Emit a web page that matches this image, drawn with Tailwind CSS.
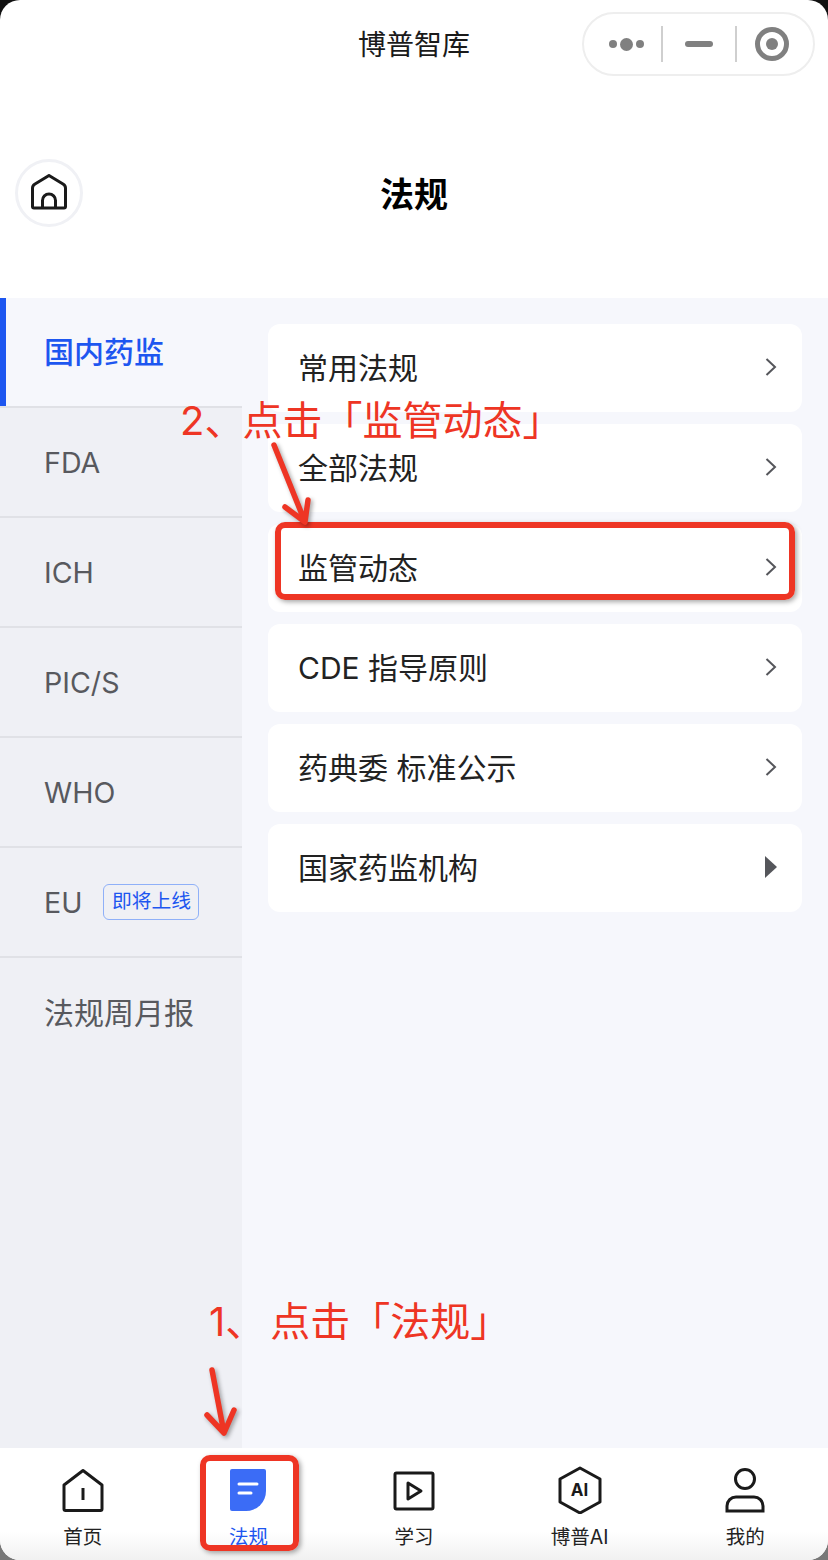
<!DOCTYPE html>
<html lang="en">
<head>
    <meta charset="UTF-8">
    <title>博普智库</title>
    <script src="https://cdn.jsdelivr.net/npm/@tailwindcss/browser@4"></script>
</head>
<body class="bg-gradient-to-b from-[#111111] from-50% to-[#777777] to-50% font-['Inter','Noto_Sans_CJK_SC',sans-serif]">
    <div class="relative w-[828px] h-[1560px] overflow-hidden bg-white rounded-[20px] flex flex-col">
        <!-- Mini program title bar -->
        <div class="relative h-[88px] shrink-0 flex items-center justify-center">
            <span class="text-[28px] text-[#1a1a1a] pt-[2px]">博普智库</span>
            <div class="absolute left-[582px] top-[12px] w-[233px] h-[64px] rounded-full border-2 border-[#eeeeee] flex items-center">
                <div class="w-[79px] h-[36px] pl-[8px] flex items-center justify-center gap-[3px] border-r-2 border-[#cfcfcf]">
                    <span class="w-[8px] h-[8px] rounded-full bg-[#808080]"></span>
                    <span class="w-[13px] h-[13px] rounded-full bg-[#808080]"></span>
                    <span class="w-[8px] h-[8px] rounded-full bg-[#808080]"></span>
                </div>
                <div class="w-[74px] h-[36px] flex items-center justify-center border-r-2 border-[#cfcfcf]">
                    <span class="w-[28px] h-[6px] rounded-full bg-[#808080]"></span>
                </div>
                <div class="flex-1 pr-[6px] flex items-center justify-center">
                    <span class="w-[34px] h-[34px] rounded-full border-[5px] border-[#808080] flex items-center justify-center">
                        <span class="w-[12px] h-[12px] rounded-full bg-[#808080]"></span>
                    </span>
                </div>
            </div>
        </div>

        <!-- Page header -->
        <div class="relative h-[210px] shrink-0 flex items-center justify-center">
            <div class="absolute left-[15px] top-[71px] w-[68px] h-[68px] rounded-full border-[3px] border-[#f0f1f5] flex items-center justify-center">
                <svg class="mb-[3px]" width="36" height="36" viewBox="0 0 36 36" fill="none" stroke="#1a1a1a" stroke-width="3" stroke-linejoin="round">
                    <path d="M18 1.5 L32 10 Q34.5 11.5 34.5 14 V32.5 a1.5 1.5 0 0 1 -1.5 1.5 H3 a1.5 1.5 0 0 1 -1.5 -1.5 V14 Q1.5 11.5 4 10 Z"/>
                    <path d="M11.5 34 V26.5 a6.5 6.5 0 0 1 13 0 V34"/>
                </svg>
            </div>
            <span class="text-[34px] font-bold text-black pt-[2px]">法规</span>
        </div>

        <!-- Body -->
        <div class="flex flex-1 min-h-0 bg-[#f6f7fc]">
            <div class="w-[242px] shrink-0 bg-[#eff0f5] text-[28.6px] text-[#58595e]">
                <div class="h-[110px] border-b-2 border-[#e0e1e6] bg-[#f6f7fc]">
                    <div class="h-full border-l-[6px] border-[#1d56f0] pl-[38px] flex items-center text-[30px] font-medium text-[#1d56f0]">国内药监</div>
                </div>
                <div class="h-[110px] border-b-2 border-[#e0e1e6] pl-[44px] pt-[2px] flex items-center">FDA</div>
                <div class="h-[110px] border-b-2 border-[#e0e1e6] pl-[44px] pt-[2px] flex items-center">ICH</div>
                <div class="h-[110px] border-b-2 border-[#e0e1e6] pl-[44px] pt-[2px] flex items-center">PIC/S</div>
                <div class="h-[110px] border-b-2 border-[#e0e1e6] pl-[44px] pt-[2px] flex items-center">WHO</div>
                <div class="h-[110px] border-b-2 border-[#e0e1e6] pl-[44px] flex items-center gap-[21px]">
                    <span class="pt-[2px]">EU</span>
                    <span class="w-[96px] h-[36px] rounded-[6px] border border-[#8fb0f8] text-[19.8px] text-[#1d56f0] flex items-center justify-center">即将上线</span>
                </div>
                <div class="h-[110px] pl-[44px] flex items-center text-[30px]">法规周月报</div>
            </div>
            <div class="flex-1 pl-[26px] pr-[26px] pt-[26px] flex flex-col gap-[12px] text-[30px] text-[#222222]">
                <div class="h-[88px] rounded-[12px] bg-white pl-[30px] pr-[25px] flex items-center justify-between">
                    <span>常用法规</span>
                    <svg class="mb-[2px]" width="12" height="18" viewBox="0 0 12 18" fill="none" stroke="#55565b" stroke-width="2"><path d="M1.5 1 L10 9 L1.5 17"/></svg>
                </div>
                <div class="h-[88px] rounded-[12px] bg-white pl-[30px] pr-[25px] flex items-center justify-between">
                    <span>全部法规</span>
                    <svg class="mb-[2px]" width="12" height="18" viewBox="0 0 12 18" fill="none" stroke="#55565b" stroke-width="2"><path d="M1.5 1 L10 9 L1.5 17"/></svg>
                </div>
                <div class="h-[88px] rounded-[12px] bg-white pl-[30px] pr-[25px] flex items-center justify-between">
                    <span>监管动态</span>
                    <svg class="mb-[2px]" width="12" height="18" viewBox="0 0 12 18" fill="none" stroke="#55565b" stroke-width="2"><path d="M1.5 1 L10 9 L1.5 17"/></svg>
                </div>
                <div class="h-[88px] rounded-[12px] bg-white pl-[30px] pr-[25px] flex items-center justify-between">
                    <span>CDE 指导原则</span>
                    <svg class="mb-[2px]" width="12" height="18" viewBox="0 0 12 18" fill="none" stroke="#55565b" stroke-width="2"><path d="M1.5 1 L10 9 L1.5 17"/></svg>
                </div>
                <div class="h-[88px] rounded-[12px] bg-white pl-[30px] pr-[25px] flex items-center justify-between">
                    <span>药典委 标准公示</span>
                    <svg class="mb-[2px]" width="12" height="18" viewBox="0 0 12 18" fill="none" stroke="#55565b" stroke-width="2"><path d="M1.5 1 L10 9 L1.5 17"/></svg>
                </div>
                <div class="h-[88px] rounded-[12px] bg-white pl-[30px] pr-[25px] flex items-center justify-between">
                    <span>国家药监机构</span>
                    <svg class="mb-[2px]" width="12" height="22" viewBox="0 0 12 22" fill="#55565b"><path d="M0 0 L12 11 L0 22 Z"/></svg>
                </div>
            </div>
        </div>

        <!-- Tab bar -->
        <div class="h-[112px] shrink-0 grid grid-cols-5 text-[19.5px] text-[#222222] bg-gradient-to-b from-white from-75% to-[#f1f1f1]">
            <div class="flex flex-col items-center pt-[18px]">
                <svg width="48" height="48" viewBox="0 0 48 48" fill="none" stroke="#1a1a1a" stroke-width="3" stroke-linejoin="round">
                    <path d="M24 4.5 L43 19 V43 a1.5 1.5 0 0 1 -1.5 1.5 H6.5 A1.5 1.5 0 0 1 5 43 V19 Z"/>
                    <path d="M24 22 V34"/>
                </svg>
                <span class="mt-[10px] leading-[26px]">首页</span>
            </div>
            <div class="flex flex-col items-center pt-[18px]">
                <svg width="48" height="48" viewBox="0 0 48 48">
                    <path d="M8 3 H40 a2 2 0 0 1 2 2 V25 a20 20 0 0 1 -20 20 H8 a2 2 0 0 1 -2 -2 V5 a2 2 0 0 1 2 -2 Z" fill="#3b6cf6"/>
                    <path d="M15 18 H33 M15 27 H27" stroke="#ffffff" stroke-width="3" stroke-linecap="round"/>
                </svg>
                <span class="mt-[10px] leading-[26px] text-[#1d56f0]">法规</span>
            </div>
            <div class="flex flex-col items-center pt-[18px]">
                <svg width="48" height="48" viewBox="0 0 48 48" fill="none" stroke="#1a1a1a" stroke-width="3" stroke-linejoin="round">
                    <rect x="5" y="7" width="38" height="36" rx="1.5"/>
                    <path d="M18 17 L31 25 L18 33 Z"/>
                </svg>
                <span class="mt-[10px] leading-[26px]">学习</span>
            </div>
            <div class="flex flex-col items-center pt-[18px]">
                <div class="relative w-[48px] h-[48px] flex items-center justify-center">
                    <svg class="absolute inset-0" width="48" height="48" viewBox="0 0 48 48" fill="none" stroke="#1a1a1a" stroke-width="3" stroke-linejoin="round">
                        <path d="M24 2 L44 13 V36 L24 47 L4 36 V13 Z"/>
                    </svg>
                    <span class="text-[17px] font-bold text-[#1a1a1a] leading-none">AI</span>
                </div>
                <span class="mt-[10px] leading-[26px]">博普AI</span>
            </div>
            <div class="flex flex-col items-center pt-[18px]">
                <svg width="48" height="48" viewBox="0 0 48 48" fill="none" stroke="#1a1a1a" stroke-width="3">
                    <circle cx="24" cy="13" r="9.5"/>
                    <path d="M6 45 V40 a9 9 0 0 1 9 -9 H33 a9 9 0 0 1 9 9 V45 Z"/>
                </svg>
                <span class="mt-[10px] leading-[26px]">我的</span>
            </div>
        </div>

        <!-- Red tutorial annotations drawn over the screenshot -->
        <div class="absolute left-[180px] top-[397px] text-[40px] leading-[48px] text-[#ee3524] whitespace-nowrap">2、<span class="-ml-[2px]">点击「监管动态」</span></div>
        <div class="absolute left-[209px] top-[1298px] text-[40px] leading-[48px] text-[#ee3524] whitespace-nowrap">1、<span class="ml-[5px]">点击「法规」</span></div>
        <div class="absolute left-[275px] top-[522px] w-[520px] h-[78px] rounded-[10px] border-[6px] border-[#ee3524] shadow-[2px_2px_5px_rgba(0,0,0,0.35)]"></div>
        <div class="absolute left-[200px] top-[1455px] w-[99px] h-[96px] rounded-[10px] border-[6px] border-[#ee3524] shadow-[2px_2px_5px_rgba(0,0,0,0.35)]"></div>
        <svg class="absolute left-0 top-0 pointer-events-none drop-shadow-[2px_2px_2px_rgba(0,0,0,0.35)]" width="828" height="1560" fill="none" stroke="#ee3524" stroke-width="5.5" stroke-linecap="round" stroke-linejoin="round">
            <path d="M274 445 L305 522 M285 507 L305 522 L308 500"/>
            <path d="M212 1370 L224 1433 M207 1415 L224 1433 L234 1410"/>
        </svg>
    </div>
</body>
</html>
